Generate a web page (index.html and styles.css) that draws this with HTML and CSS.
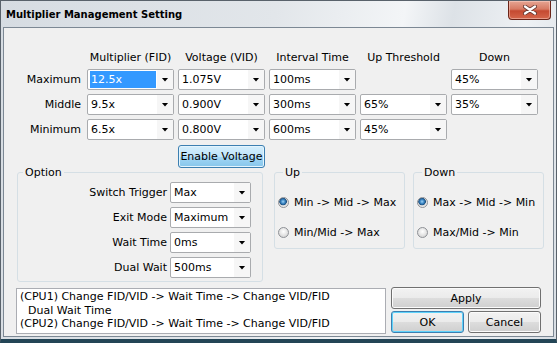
FILE: index.html
```html
<!DOCTYPE html>
<html lang="en">
  <head>
    <meta charset="UTF-8" />
    <title>Multiplier Management Setting</title>
    <link rel="stylesheet" href="styles.css">
  </head>
  <body>
    <div class="window">
      <div class="titlebar">
        <span class="title">Multiplier Management Setting</span>
        <button class="close" title="Close">
          <svg width="14" height="10" viewBox="0 0 14 10">
            <path d="M2 1.5 L12 8.5 M12 1.5 L2 8.5" stroke="#6b3b33" stroke-width="4" stroke-linecap="round" />
            <path d="M2 1.5 L12 8.5 M12 1.5 L2 8.5" stroke="#ffffff" stroke-width="2.2" stroke-linecap="round" />
          </svg>
        </button>
      </div>
      <div class="client">
        <div class="levels">
          <div></div>
          <div class="head">Multiplier (FID)</div>
          <div class="head">Voltage (VID)</div>
          <div class="head">Interval Time</div>
          <div class="head">Up Threshold</div>
          <div class="head">Down</div>

          <div class="row-label">Maximum</div>
          <div class="combo sel"><span class="val">12.5x</span><span class="drop"></span></div>
          <div class="combo"><span class="val">1.075V</span><span class="drop"></span></div>
          <div class="combo"><span class="val">100ms</span><span class="drop"></span></div>
          <div></div>
          <div class="combo"><span class="val">45%</span><span class="drop"></span></div>

          <div class="row-label">Middle</div>
          <div class="combo"><span class="val">9.5x</span><span class="drop"></span></div>
          <div class="combo"><span class="val">0.900V</span><span class="drop"></span></div>
          <div class="combo"><span class="val">300ms</span><span class="drop"></span></div>
          <div class="combo"><span class="val">65%</span><span class="drop"></span></div>
          <div class="combo"><span class="val">35%</span><span class="drop"></span></div>

          <div class="row-label">Minimum</div>
          <div class="combo"><span class="val">6.5x</span><span class="drop"></span></div>
          <div class="combo"><span class="val">0.800V</span><span class="drop"></span></div>
          <div class="combo"><span class="val">600ms</span><span class="drop"></span></div>
          <div class="combo"><span class="val">45%</span><span class="drop"></span></div>
          <div></div>

          <button class="btn hot enable">Enable Voltage</button>
        </div>

        <div class="groups">
          <div class="group option">
            <div class="group-title">Option</div>
            <div class="opt-row">
              <span>Switch Trigger</span>
              <div class="combo small"><span class="val">Max</span><span class="drop"></span></div>
            </div>
            <div class="opt-row">
              <span>Exit Mode</span>
              <div class="combo small"><span class="val">Maximum</span><span class="drop"></span></div>
            </div>
            <div class="opt-row">
              <span>Wait Time</span>
              <div class="combo small"><span class="val">0ms</span><span class="drop"></span></div>
            </div>
            <div class="opt-row">
              <span>Dual Wait</span>
              <div class="combo small"><span class="val">500ms</span><span class="drop"></span></div>
            </div>
          </div>

          <div class="group dir">
            <div class="group-title">Up</div>
            <label class="radio on"><i></i>Min -&gt; Mid -&gt; Max</label>
            <label class="radio"><i></i>Min/Mid -&gt; Max</label>
          </div>

          <div class="group dir down">
            <div class="group-title">Down</div>
            <label class="radio on"><i></i>Max -&gt; Mid -&gt; Min</label>
            <label class="radio"><i></i>Max/Mid -&gt; Min</label>
          </div>
        </div>

        <div class="footer">
          <div class="log">
            <div>(CPU1) Change FID/VID -&gt; Wait Time -&gt; Change VID/FID</div>
            <div class="indent">Dual Wait Time</div>
            <div>(CPU2) Change FID/VID -&gt; Wait Time -&gt; Change VID/FID</div>
          </div>
          <div class="actions">
            <button class="btn apply">Apply</button>
            <div class="pair">
              <button class="btn default">OK</button>
              <button class="btn">Cancel</button>
            </div>
          </div>
        </div>
      </div>
    </div>
  </body>
</html>
```

FILE: styles.css
```css
* {
  box-sizing: border-box;
}
body {
  margin: 0;
  font-family: "DejaVu Sans", Verdana, sans-serif;
  font-size: 11px;
  color: #000;
  background: #fff;
}
.window {
  width: 557px;
  height: 343px;
  display: flex;
  flex-direction: column;
  padding: 0 2px 2px;
  border: 1px solid #59626b;
  border-bottom: 4px solid #234556;
  background: linear-gradient(100deg, #d6dce2 0%, #e2e6ea 45%, #f3f5f7 66%, #dde2e7 74%, #eef1f4 86%, #d8dee4 100%);
}
.titlebar {
  height: 26px;
  display: flex;
  justify-content: space-between;
  align-items: flex-start;
}
.title {
  font-weight: bold;
  font-size: 10px;
  line-height: 14px;
  margin: 7px 0 0 3px;
}
.close {
  width: 43px;
  height: 19px;
  margin-right: 3px;
  padding: 0;
  display: flex;
  align-items: center;
  justify-content: center;
  border: 1px solid #6a2418;
  border-top: none;
  border-radius: 0 0 4px 4px;
  background: linear-gradient(#e6a593 0%, #d77a63 45%, #c54a31 55%, #d5664b 100%);
  box-shadow: inset 0 0 0 1px rgba(255, 220, 210, 0.45);
}
.client {
  flex: 1;
  border: 1px solid #7c8894;
  background: #f0f0f0;
}

/* multiplier table */
.levels {
  display: grid;
  grid-template-columns: 79px repeat(5, 87px);
  grid-template-rows: 16px repeat(3, 21px) 23px;
  column-gap: 4px;
  row-gap: 4px;
  margin-top: 21px;
}
.head {
  text-align: center;
  line-height: 16px;
  padding-top: 1px;
  white-space: nowrap;
}
.row-label {
  text-align: right;
  line-height: 21px;
  padding-right: 2px;
}
.combo {
  display: flex;
  height: 21px;
  border: 1px solid #a9abae;
  border-radius: 2px;
  background: #fff;
}
.combo .val {
  flex: 1;
  margin: 1px 1px 1px 2px;
  padding-left: 1px;
  line-height: 17px;
  white-space: nowrap;
}
.combo.sel .val {
  background: #3399ff;
  color: #fff;
}
.combo .drop {
  width: 16px;
  display: flex;
  align-items: center;
  justify-content: center;
  background: #f6f6f6;
}
.combo .drop::after {
  content: "";
  width: 7px;
  height: 4px;
  background: #000;
  clip-path: polygon(0 0, 100% 0, 50% 100%);
}
.combo.small {
  width: 81px;
}

/* buttons */
.btn {
  height: 22px;
  padding: 0;
  font: inherit;
  color: #000;
  border: 1px solid #707070;
  border-radius: 3px;
  background: linear-gradient(#f2f2f2 0%, #ebebeb 50%, #dddddd 51%, #cfcfcf 100%);
  box-shadow: inset 0 0 0 1px #fbfbfb;
}
.btn.hot {
  border-color: #3c7fb1;
  background: linear-gradient(#d4eefc 0%, #bfe4fa 50%, #a3d6f5 51%, #86c6eb 100%);
  box-shadow: inset 0 0 0 1px #e3f4fd;
}
.btn.default {
  border-color: #3c7fb1;
  box-shadow: inset 0 0 0 1px #5fd3fb;
}
.enable {
  grid-column: 3;
  height: 23px;
  margin-top: 1px;
}

/* group boxes */
.groups {
  display: flex;
  align-items: flex-start;
  margin: 5px 0 0 13px;
}
.group {
  border: 1px solid #d5dfe5;
  border-radius: 3px;
}
.group-title {
  width: fit-content;
  margin: -7px 0 -1px 5px;
  padding: 0 2px;
  line-height: 13px;
  background: #f0f0f0;
}
.option {
  width: 246px;
  padding: 0 11px 3px 0;
}
.opt-row {
  display: flex;
  justify-content: flex-end;
  align-items: center;
  gap: 3px;
  margin-top: 4px;
}
.opt-row:first-of-type {
  margin-top: 0;
}
.dir {
  width: 131px;
  margin-left: 11px;
  padding: 0 0 8px 3px;
}
.dir.down {
  margin-left: 8px;
}
.radio {
  display: flex;
  align-items: center;
  gap: 5px;
  height: 16px;
  margin-top: 14px;
  white-space: nowrap;
}
.group-title + .radio {
  margin-top: 16px;
}
.radio i {
  width: 11px;
  height: 11px;
  border-radius: 50%;
  border: 1px solid #8e9196;
  background: radial-gradient(circle at 50% 40%, #ffffff 0, #e9e9e9 3px, #d2d2d2 6px);
}
.radio.on i {
  background: radial-gradient(circle at 45% 40%, #9fd3f5 0, #3b86c4 2px, #1c4f7f 3.5px, #dcdcdc 4px, #f4f4f4 6px);
}

/* bottom */
.footer {
  display: flex;
  align-items: flex-start;
  margin: 5px 0 0 12px;
}
.log {
  width: 370px;
  height: 46px;
  margin-top: 1px;
  padding: 1px 3px 0;
  border: 1px solid #abadb3;
  background: #fff;
  line-height: 13.5px;
  white-space: nowrap;
  overflow: hidden;
}
.log .indent {
  padding-left: 8px;
}
.actions {
  width: 150px;
  margin-left: 5px;
  display: flex;
  flex-direction: column;
  gap: 2px;
}
.pair {
  display: flex;
  gap: 4px;
}
.pair .btn {
  width: 73px;
}
```
